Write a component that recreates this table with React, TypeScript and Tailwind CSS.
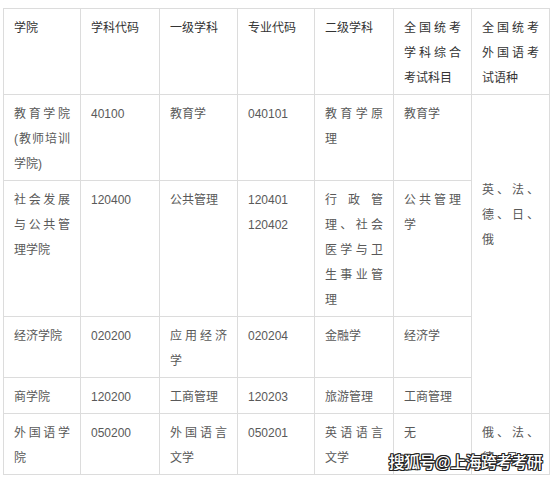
type Cell = { text: string; rowSpan?: number; pad?: boolean }

const header = ['学院', '学科代码', '一级学科', '专业代码', '二级学科', '全国统考学科综合考试科目', '全国统考外国语考试语种']

const rows: Cell[][] = [
  [{ text: '教育学院(教师培训学院)' }, { text: '40100' }, { text: '教育学' }, { text: '040101' }, { text: '教育学原理' }, { text: '教育学' }, { text: '英、法、德、日、俄', rowSpan: 4, pad: true }],
  [{ text: '社会发展与公共管理学院' }, { text: '120400' }, { text: '公共管理' }, { text: '120401\n120402' }, { text: '行政管理、社会医学与卫生事业管理' }, { text: '公共管理学' }],
  [{ text: '经济学院' }, { text: '020200' }, { text: '应用经济学' }, { text: '020204' }, { text: '金融学' }, { text: '经济学' }],
  [{ text: '商学院' }, { text: '120200' }, { text: '工商管理' }, { text: '120203' }, { text: '旅游管理' }, { text: '工商管理' }],
  [{ text: '外国语学院' }, { text: '050200' }, { text: '外国语言文学' }, { text: '050201' }, { text: '英语语言文学' }, { text: '无' }, { text: '俄、法、德、日' }],
]

const cellCls = 'border border-[#dcdcdc] align-top px-[10px] pt-[7px] pb-[3px] text-justify leading-[25px] whitespace-pre-line'

export default function App() {
  return (
    <div className="relative w-[557px] h-[482px] bg-white overflow-hidden font-['Liberation_Sans','Noto_Sans_CJK_SC',sans-serif] text-[12px]">
      <table className="ml-[3px] mt-[8px] w-[546px] table-fixed border-collapse">
        <colgroup>
          <col className="w-[77px]" />
          <col className="w-[79px]" />
          <col className="w-[78px]" />
          <col className="w-[77px]" />
          <col className="w-[79px]" />
          <col className="w-[78px]" />
          <col className="w-[78px]" />
        </colgroup>
        <thead>
          <tr>
            {header.map(h => (
              <th key={h} className={`${cellCls} font-normal text-[#333]`}>{h}</th>
            ))}
          </tr>
        </thead>
        <tbody>
          {rows.map((r, i) => (
            <tr key={i}>
              {r.map((c, j) => (
                <td key={j} rowSpan={c.rowSpan} className={`${cellCls} text-[#595959]`}>
                  {c.pad ? <div className="pt-[76px]">{c.text}</div> : c.text}
                </td>
              ))}
            </tr>
          ))}
        </tbody>
      </table>

      {/* watermark */}
      <div className="absolute right-[15px] top-[452px] text-[16px] font-medium leading-[22px] text-white tracking-[-0.7px] [text-shadow:1px_1px_0_#222,-1px_-1px_0_#222,1px_-1px_0_#222,-1px_1px_0_#222,0_1px_0_#222,0_-1px_0_#222,1px_0_0_#222,-1px_0_0_#222]">
        搜狐号@上海跨考考研
      </div>
    </div>
  )
}
